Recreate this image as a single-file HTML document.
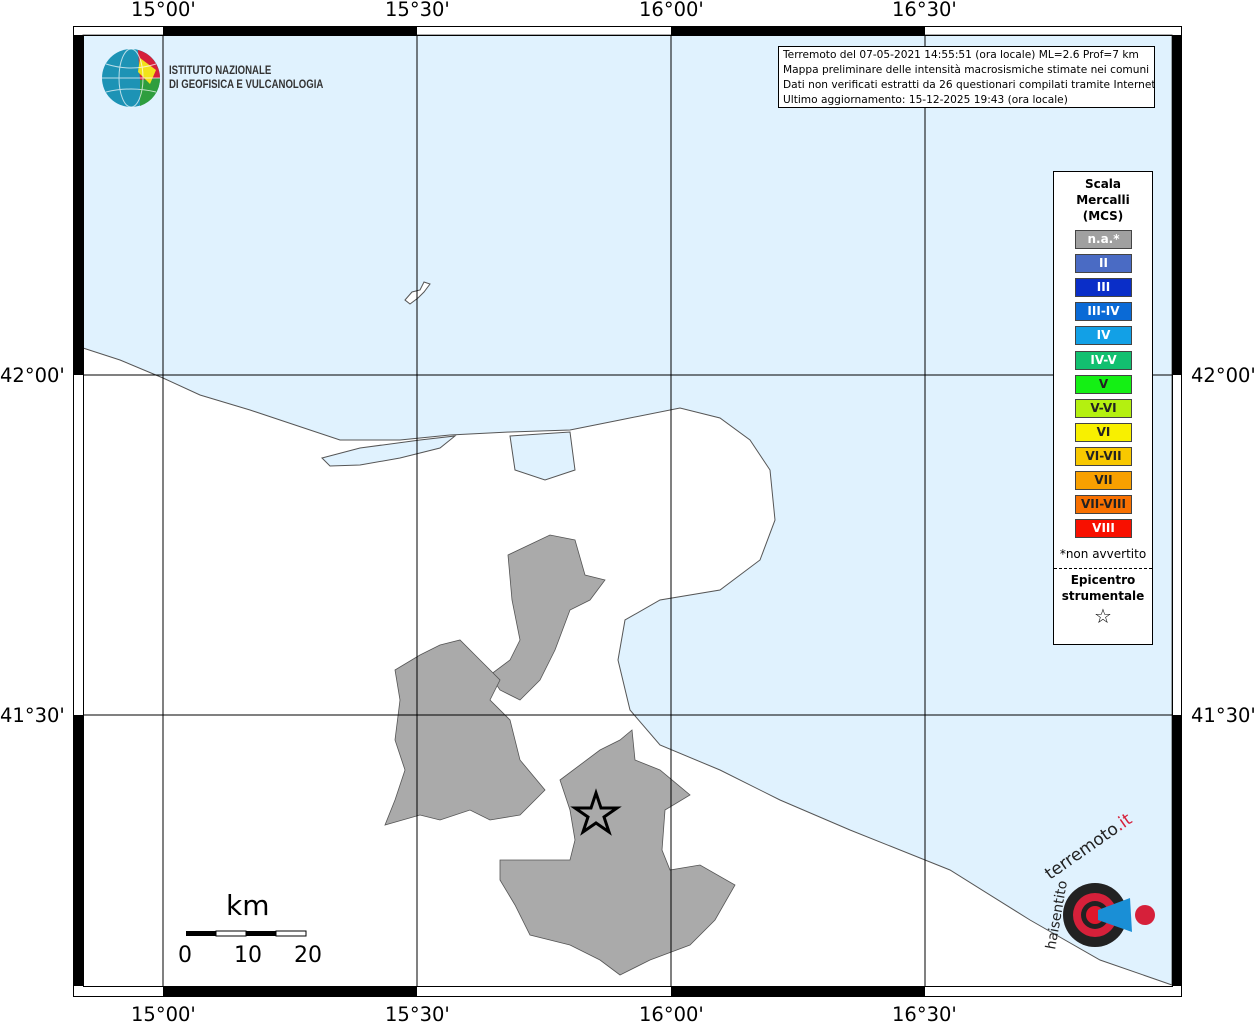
<!DOCTYPE html>
<html><head><meta charset="utf-8"><style>
body{margin:0;background:#fff;width:1255px;height:1024px;overflow:hidden;font-family:"DejaVu Sans","Liberation Sans",sans-serif}
.lab{position:absolute;font-size:19.5px;color:#000}
</style></head><body>
<svg width="1255" height="1024" style="position:absolute;left:0;top:0">
<rect x="83" y="35" width="1089" height="951" fill="#fff"/>
<path d="M83 35 H1172 V985 L1100 960 L1030 920 L950 870 L850 830 L780 800 L720 770 L660 745 L630 710 L618 660 L625 620 L660 600 L720 590 L760 560 L775 520 L770 470 L750 440 L720 418 L680 408 L620 420 L570 430 L510 432 L450 435 L400 440 L340 440 L310 430 L250 410 L200 395 L163 378 L120 360 L83 348 Z" fill="#e0f2fe" stroke="#555" stroke-width="1"/>
<path d="M322 458 L360 448 L420 440 L455 436 L440 448 L400 458 L360 465 L330 466 Z" fill="#e0f2fe" stroke="#555"/>
<path d="M510 436 L570 432 L575 470 L545 480 L515 470 Z" fill="#e0f2fe" stroke="#555"/>
<path d="M405 300 L412 292 L420 290 L424 282 L430 284 L424 292 L418 298 L410 304Z" fill="#fff" stroke="#555"/>
<g fill="#aaaaaa" stroke="#555" stroke-width="0.8">
<path d="M508 555 L550 535 L575 540 L585 575 L605 580 L590 600 L570 610 L555 650 L540 680 L520 700 L500 690 L490 675 L510 660 L520 640 L512 600 Z"/>
<path d="M395 670 L420 655 L440 645 L460 640 L480 660 L500 680 L490 700 L510 720 L520 760 L545 790 L520 815 L490 820 L470 810 L440 820 L420 815 L385 825 L395 800 L405 770 L395 740 L400 700 Z"/>
<path d="M560 780 L600 750 L620 740 L632 730 L635 760 L660 770 L690 795 L665 810 L662 850 L670 870 L700 865 L735 885 L715 920 L690 945 L650 960 L620 975 L600 960 L570 945 L530 935 L515 905 L500 880 L500 860 L540 860 L570 860 L575 840 L570 810 Z"/>
</g>
<g stroke="#000" stroke-width="1" fill="none">
<line x1="163" y1="35" x2="163" y2="986"/><line x1="417" y1="35" x2="417" y2="986"/>
<line x1="671" y1="35" x2="671" y2="986"/><line x1="925" y1="35" x2="925" y2="986"/>
<line x1="83" y1="375" x2="1172" y2="375"/><line x1="83" y1="715" x2="1172" y2="715"/>
<rect x="73.5" y="26.5" width="1108" height="970"/>
<rect x="83.5" y="35.5" width="1089" height="951"/>
</g>
<g fill="#000">
<rect x="163" y="27" width="254" height="8"/><rect x="671" y="27" width="254" height="8"/>
<rect x="163" y="987" width="254" height="9"/><rect x="671" y="987" width="254" height="9"/>
<rect x="74" y="35" width="9" height="340"/><rect x="74" y="715" width="9" height="271"/>
<rect x="1173" y="35" width="8" height="340"/><rect x="1173" y="715" width="8" height="271"/>
</g>
<polygon points="596,793 601,808 617,808 604,817 609,832 596,823 583,832 588,817 575,808 591,808" fill="none" stroke="#000" stroke-width="3"/>
<rect x="186" y="931" width="30" height="5" fill="#000"/><rect x="216" y="931" width="30" height="5" fill="#fff" stroke="#000"/><rect x="246" y="931" width="30" height="5" fill="#000"/><rect x="276" y="931" width="30" height="5" fill="#fff" stroke="#000"/>
<circle cx="131" cy="78" r="29" fill="#1d93b5"/>
<path d="M138 50 A29 29 0 0 1 160 78 L140 80Z" fill="#d6203a"/>
<path d="M140 80 L160 78 A29 29 0 0 1 140 106Z" fill="#2e9e3e"/>
<path d="M140 58 L156 70 L150 84 L138 72Z" fill="#f2e31b"/>
<g stroke="#fff" stroke-width="1" fill="none" opacity=".7"><ellipse cx="131" cy="78" rx="12" ry="29"/><line x1="102" y1="78" x2="160" y2="78"/><path d="M106 64 Q131 72 156 64"/><path d="M106 92 Q131 86 156 92"/></g>
<circle cx="1095" cy="915" r="32" fill="#222"/><circle cx="1095" cy="915" r="22" fill="#d6203a"/><circle cx="1095" cy="915" r="14" fill="#222"/><circle cx="1095" cy="915" r="9" fill="#e0172c"/>
<path d="M1098 910 L1130 898 L1132 932 L1098 920Z" fill="#1a8fd6"/>
<circle cx="1145" cy="915" r="10" fill="#d6203a"/>
<text x="1050" y="880" font-size="17" fill="#222" transform="rotate(-35 1050 880)" font-family="DejaVu Sans">terremoto<tspan fill="#d6203a">.it</tspan></text>
<text x="1055" y="950" font-size="14" fill="#222" transform="rotate(-80 1055 950)" font-family="DejaVu Sans">haisentito</text>
</svg>
<div class="lab" style="left:131px;top:-2px">15°00'</div><div class="lab" style="left:385px;top:-2px">15°30'</div><div class="lab" style="left:639px;top:-2px">16°00'</div><div class="lab" style="left:892px;top:-2px">16°30'</div>
<div class="lab" style="left:131px;top:1003px">15°00'</div><div class="lab" style="left:385px;top:1003px">15°30'</div><div class="lab" style="left:639px;top:1003px">16°00'</div><div class="lab" style="left:892px;top:1003px">16°30'</div>
<div class="lab" style="left:0;top:364px">42°00'</div><div class="lab" style="left:0;top:704px">41°30'</div>
<div class="lab" style="left:1191px;top:364px">42°00'</div><div class="lab" style="left:1191px;top:704px">41°30'</div>
<div style="position:absolute;left:169px;top:63px;font-size:12px;line-height:14px;color:#333;font-weight:bold;font-family:'Liberation Sans';transform:scaleX(.8);transform-origin:left;white-space:nowrap">ISTITUTO NAZIONALE<br>DI GEOFISICA E VULCANOLOGIA</div>
<div style="position:absolute;left:778px;top:46px;width:377px;height:62px;background:#fff;border:1px solid #000;font-size:10.6px;line-height:15px;padding:1px 4px;box-sizing:border-box;white-space:nowrap;overflow:hidden">Terremoto del 07-05-2021 14:55:51 (ora locale) ML=2.6 Prof=7 km<br>Mappa preliminare delle intensità macrosismiche stimate nei comuni<br>Dati non verificati estratti da 26 questionari compilati tramite Internet.<br>Ultimo aggiornamento: 15-12-2025 19:43 (ora locale)</div>
<div style="position:absolute;left:226px;top:889px;font-size:28px">km</div>
<div style="position:absolute;left:178px;top:943px;font-size:22px">0</div><div style="position:absolute;left:234px;top:943px;font-size:22px">10</div><div style="position:absolute;left:294px;top:943px;font-size:22px">20</div>
<div style="position:absolute;left:1053px;top:171px;width:100px;height:474px;background:#fff;border:1px solid #000;box-sizing:border-box;font-size:12px;text-align:center;font-weight:bold;line-height:16px">
<div style="margin-top:4px">Scala<br>Mercalli<br>(MCS)</div>
<div id="lg"></div>
</div>
<script>
var c=[["n.a.*","#a0a0a0"],["II","#4a6bc4"],["III","#0a2ec8"],["III-IV","#0a6ad6"],["IV","#12a0e6"],["IV-V","#12c070"],["V","#14f014"],["V-VI","#b4f010"],["VI","#f8f000"],["VI-VII","#f8c800"],["VII","#f8a000"],["VII-VIII","#f87000"],["VIII","#f81000"]];
var h="";c.forEach(function(a,i){h+='<div style="position:absolute;left:21px;top:'+(58+i*24.1)+'px;width:57px;height:19px;background:'+a[1]+';border:1px solid #444;box-sizing:border-box;color:'+(i>=6&&i<=11?'#222':'#fff')+';font-size:12px;line-height:17px">'+a[0]+'</div>'});
h+='<div style="position:absolute;left:0;top:374px;width:98px;font-weight:normal">*non avvertito</div><div style="position:absolute;left:0;top:396px;width:98px;border-top:1px dashed #000"></div><div style="position:absolute;left:0;top:400px;width:98px">Epicentro<br>strumentale</div><div style="position:absolute;left:0;top:436px;width:98px;font-size:20px;font-weight:normal">☆</div>';
document.getElementById("lg").innerHTML=h;
</script>
</body></html>
